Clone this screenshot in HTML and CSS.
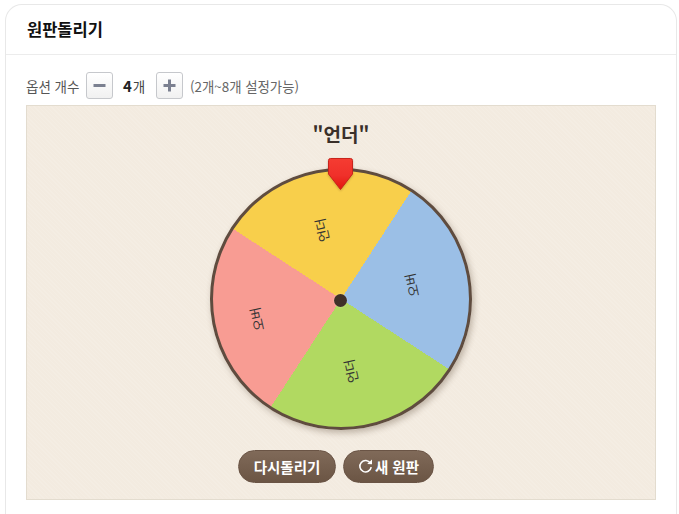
FILE: index.html
```html
<!DOCTYPE html>
<html lang="ko">
<head>
<meta charset="utf-8">
<title>원판돌리기</title>
<link rel="stylesheet" href="styles.css">
</head>
<body>
<section class="card">
  <h1 class="card-title">원판돌리기</h1>
  <div class="card-body">
    <div class="options">
      <span class="options-label">옵션 개수</span>
      <button class="step" type="button" aria-label="줄이기">
        <svg width="13" height="13" viewBox="0 0 13 13"><rect x="0.5" y="5" width="12" height="3" fill="#7b8090"/></svg>
      </button>
      <span class="count"><b>4</b>개</span>
      <button class="step" type="button" aria-label="늘리기">
        <svg width="13" height="13" viewBox="0 0 13 13"><path d="M5 0.5h3V5h4.5v3H8v4.5H5V8H0.5V5H5z" fill="#7b8090"/></svg>
      </button>
      <span class="hint">(2개~8개 설정가능)</span>
    </div>
    <div class="panel">
      <h2 class="result">"언더"</h2>
      <div class="stage">
        <div class="wheel"></div>
        <span class="label label-a">언더</span>
        <span class="label label-b">오버</span>
        <span class="label label-c">언더</span>
        <span class="label label-d">오버</span>
        <div class="hub"></div>
        <svg class="pointer" width="25" height="32" viewBox="0 0 25 32">
          <defs>
            <linearGradient id="pin" x1="0" y1="0" x2="0" y2="1">
              <stop offset="0" stop-color="#f53c32"/>
              <stop offset="0.55" stop-color="#f0302a"/>
              <stop offset="1" stop-color="#e2140c"/>
            </linearGradient>
          </defs>
          <path d="M2.5 0.5h20a2 2 0 0 1 2 2V16L12.5 31.5 0.5 16V2.5a2 2 0 0 1 2-2z" fill="url(#pin)" stroke="#c9241c" stroke-width="1"/>
        </svg>
      </div>
      <div class="actions">
        <button class="pill pill-again" type="button">다시돌리기</button>
        <button class="pill pill-new" type="button">
          <svg width="15" height="15" viewBox="0 0 15 15"><path d="M12.4 4.2A5.7 5.7 0 1 0 13.2 8.2" fill="none" stroke="#fff" stroke-width="1.6"/><path d="M9.2 4.9L14 5.3V0.6z" fill="#fff"/></svg>
          새 원판
        </button>
      </div>
    </div>
  </div>
</section>
</body>
</html>
```
FILE: styles.css
```css
* { box-sizing: border-box; }
html, body { height: 100%; }
body {
  margin: 0;
  padding: 4px 2px 0 5px;
  background: #fff;
  overflow: hidden;
  font-family: "Noto Sans CJK KR", "Noto Sans", sans-serif;
  color: #333;
}
.card {
  width: 672px;
  height: 510px;
  border: 1px solid #e8e8e8;
  border-bottom: 0;
  border-radius: 17px 17px 0 0;
}
.card-title {
  margin: 0;
  height: 50px;
  padding-left: 21px;
  line-height: 49px;
  font-size: 16.5px;
  font-weight: 700;
  color: #111;
  border-bottom: 1px solid #ececec;
}
.card-body { padding: 0 20px; }
.options {
  display: flex;
  align-items: center;
  height: 50px;
  padding-top: 11px;
  font-size: 13.5px;
  color: #555;
}
.options-label { width: 60px; }
.step {
  display: flex;
  align-items: center;
  justify-content: center;
  width: 27px;
  height: 27px;
  padding: 0;
  border: 1px solid #c6c8cc;
  border-radius: 3px;
  background: linear-gradient(#fff, #f1f1f1);
}
.count {
  width: 43px;
  padding-left: 10px;
  color: #444;
}
.count b { font-size: 15px; font-weight: 700; color: #222; margin-right: 1px; }
.hint { margin-left: 7px; font-size: 13.4px; color: #666; }
.panel {
  display: flex;
  flex-direction: column;
  align-items: center;
  width: 630px;
  height: 395px;
  border: 1px solid #e3dccf;
  background-color: #f3ebe0;
  background-image: repeating-linear-gradient(45deg, rgba(255,255,255,.1) 0 1px, transparent 1px 3px);
}
.result {
  margin: 14px 0 0;
  height: 48px;
  line-height: 28px;
  font-size: 19px;
  font-weight: 700;
  color: #3a302a;
}
.stage {
  position: relative;
  width: 262px;
  height: 262px;
  margin-bottom: 20px;
}
.wheel {
  width: 100%;
  height: 100%;
  border: 3px solid #5f4c3f;
  border-radius: 50%;
  background: conic-gradient(from 303deg, #f8cf4b 0 90deg, #9bbfe6 90deg 180deg, #b1d961 180deg 270deg, #f89c93 270deg 360deg);
  background-origin: border-box;
  box-shadow: 2px 3px 6px rgba(70, 50, 30, .3);
}
.label {
  position: absolute;
  width: 40px;
  margin: -10px 0 0 -20px;
  line-height: 20px;
  font-size: 13px;
  text-align: center;
  color: #333;
  transform: rotate(-102.5deg);
}
.label-a { left: 112px; top: 62px; }
.label-b { left: 202px; top: 117px; }
.label-c { left: 141px; top: 203px; }
.label-d { left: 47px; top: 151px; }
.hub {
  position: absolute;
  left: 124px;
  top: 126px;
  width: 13px;
  height: 13px;
  border-radius: 50%;
  background: #3f3028;
  box-shadow: 0 0 2px rgba(255,255,255,.4);
}
.pointer {
  position: absolute;
  left: 118px;
  top: -10px;
  filter: drop-shadow(0 1px 1px rgba(90, 40, 20, .3));
}
.actions { display: flex; gap: 7px; margin-right: 10px; }
.pill {
  display: flex;
  align-items: center;
  justify-content: center;
  gap: 2px;
  height: 33px;
  padding: 0;
  border: 1px solid #6a5445;
  border-radius: 17px;
  background: linear-gradient(#806a59, #6b5544);
  color: #fff;
  font-family: inherit;
  font-size: 14.5px;
  font-weight: 700;
}
.pill-again { width: 98px; }
.pill-new { width: 91px; }
```
